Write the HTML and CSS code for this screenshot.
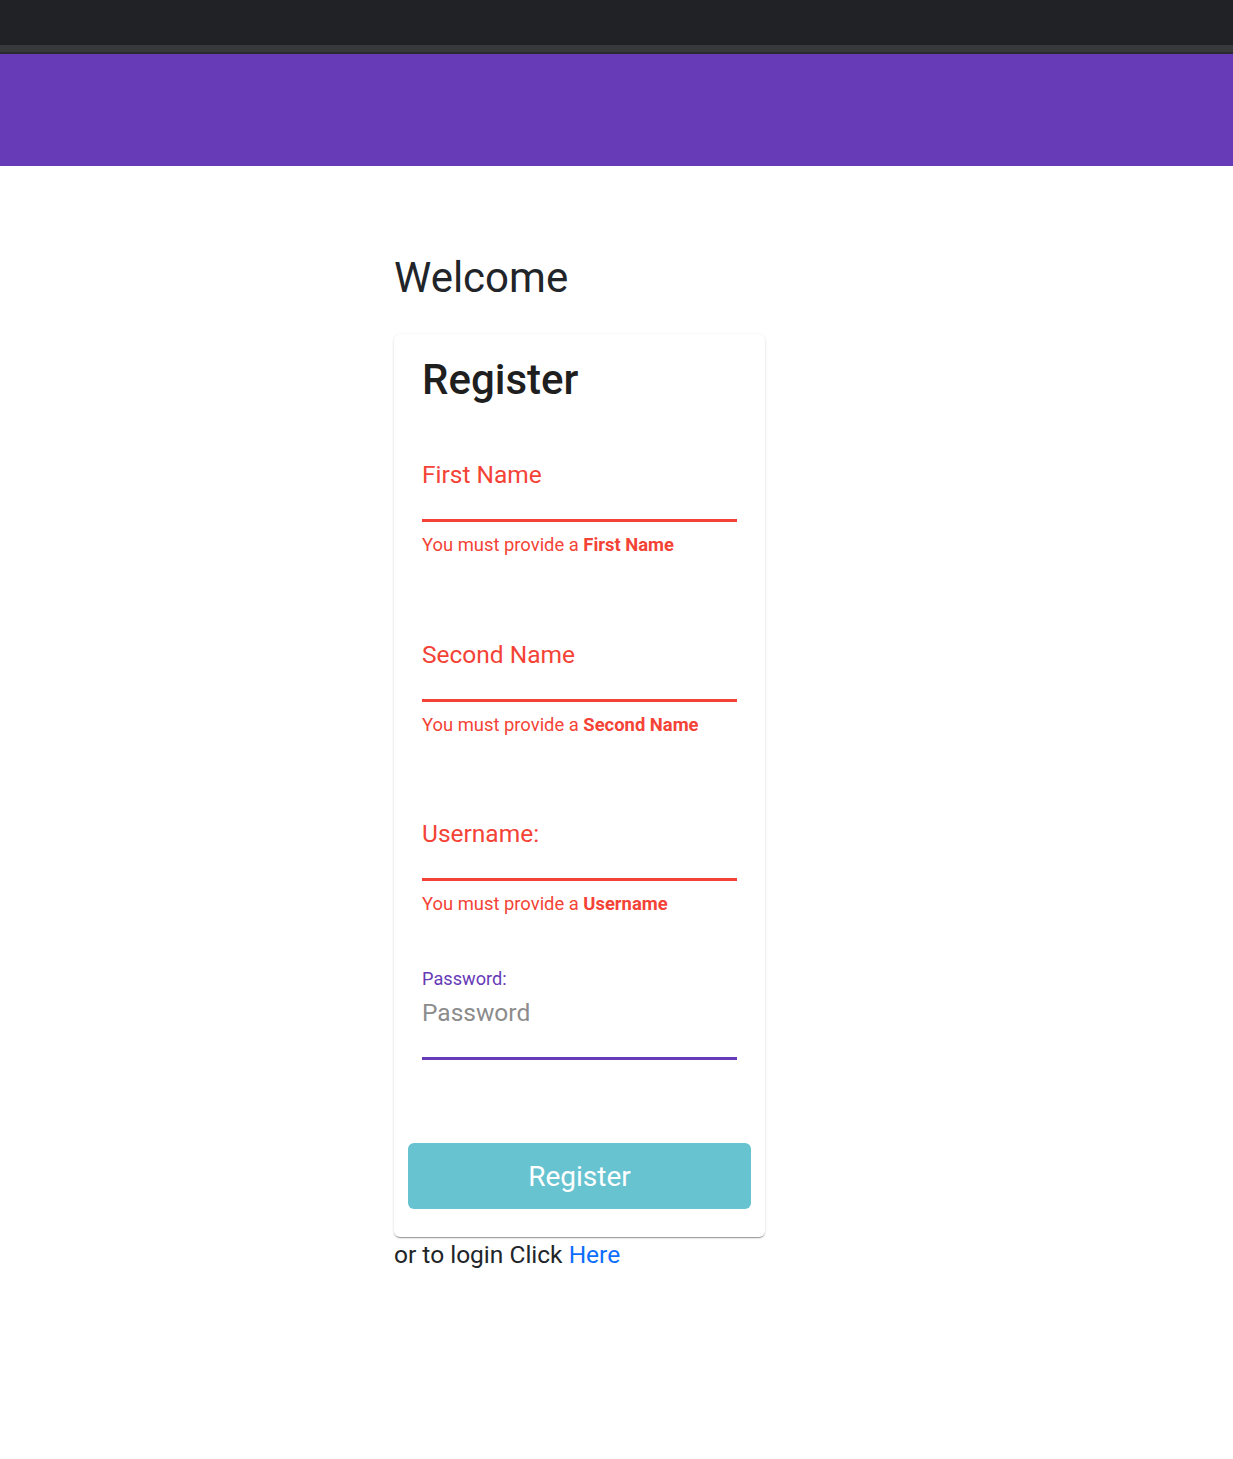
FILE: index.html
```html
<!DOCTYPE html>
<html lang="en">
<head>
<meta charset="utf-8">
<title>Register</title>
<link rel="stylesheet" href="styles.css">
</head>
<body>
<div class="chrome">
  <div class="chrome-top"></div>
  <div class="chrome-strip"></div>
  <div class="chrome-edge"></div>
</div>
<header class="toolbar"></header>
<main class="main">
  <div class="wrap">
    <h1 class="welcome">Welcome</h1>
    <section class="card">
      <h2 class="card-title">Register</h2>
      <div class="field field-first invalid">
        <div class="field-label">First Name</div>
        <div class="field-line"></div>
        <div class="field-hint">You must provide a <strong>First Name</strong></div>
      </div>
      <div class="field invalid">
        <div class="field-label">Second Name</div>
        <div class="field-line"></div>
        <div class="field-hint">You must provide a <strong>Second Name</strong></div>
      </div>
      <div class="field invalid">
        <div class="field-label">Username:</div>
        <div class="field-line"></div>
        <div class="field-hint">You must provide a <strong>Username</strong></div>
      </div>
      <div class="field field-pass focused">
        <div class="float-label">Password:</div>
        <div class="field-placeholder">Password</div>
        <div class="field-line"></div>
      </div>
      <button class="btn-register" type="button">Register</button>
    </section>
    <p class="login">or to login Click <a href="#" class="login-link">Here</a></p>
  </div>
</main>
</body>
</html>
```
FILE: styles.css
```css
* { box-sizing: border-box; }
html, body { margin: 0; padding: 0; }
body {
  font-family: Roboto, "Liberation Sans", Arial, sans-serif;
  color: #212529;
  background: #fff;
  width: 1233px;
  min-height: 1459px;
}
.chrome-top { height: 45px; background: #212226; }
.chrome-strip { height: 7px; background: #37393d; }
.chrome-edge { height: 2px; background: #2a2b2f; }
.toolbar { height: 112px; background: #673ab7; }

.main { padding-top: 85px; }
.wrap { margin-left: 394px; width: 371px; }
.welcome {
  margin: 0;
  height: 54px;
  font-size: 42px;
  font-weight: 400;
  line-height: 54px;
  color: #212529;
}
.card {
  margin-top: 29px;
  background: #fff;
  border-radius: 6px;
  padding: 21px 28px 28px;
  box-shadow: 0 2px 1px -1px rgba(0,0,0,.22), 0 1px 1px 0 rgba(0,0,0,.16), 0 1px 3px 0 rgba(0,0,0,.12);
}
.card-title {
  margin: 0;
  font-size: 42px;
  font-weight: 500;
  line-height: 1.2;
  color: #1f1f1f;
}
.field { padding-top: 85px; }
.field-first { padding-top: 56px; }
.field-label {
  font-size: 24.5px;
  line-height: 28px;
  color: #f44336;
}
.field-line {
  height: 3px;
  margin-top: 30px;
  background: #f44336;
}
.field-hint {
  margin-top: 12px;
  font-size: 18.4px;
  line-height: 21.5px;
  color: #f44336;
}
.field-hint strong { font-weight: 700; }
.field-pass { padding-top: 53px; }
.float-label {
  font-size: 18.2px;
  line-height: 21.6px;
  color: #673ab7;
}
.field-placeholder {
  margin-top: 9px;
  font-size: 24.5px;
  line-height: 29px;
  color: #8c8c8c;
}
.field-pass .field-line { background: #673ab7; margin-top: 30px; }
.btn-register {
  display: block;
  width: calc(100% + 28px);
  margin: 83px -14px 0;
  height: 66px;
  border: 0;
  border-radius: 6px;
  background: #68c3d1;
  color: #fff;
  font-family: Roboto, "Liberation Sans", Arial, sans-serif;
  font-size: 28px;
  font-weight: 400;
}
.login {
  margin: 0;
  font-size: 24.5px;
  line-height: 36px;
  color: #212529;
}
.login-link { color: #0d6efd; text-decoration: none; }
```
